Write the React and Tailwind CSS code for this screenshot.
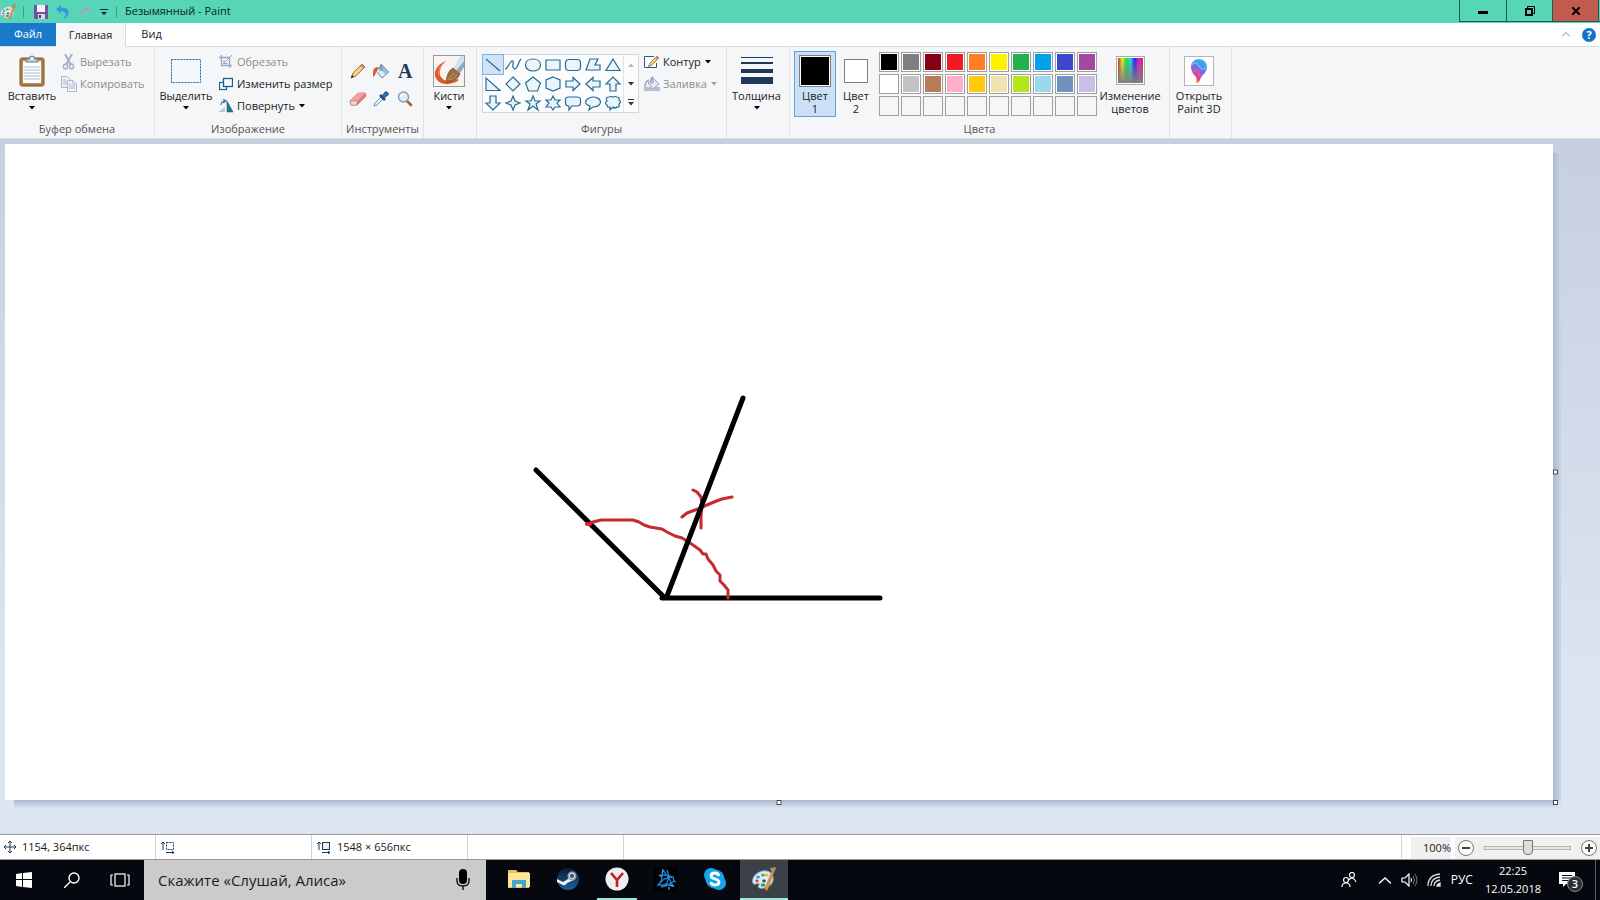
import {
    useState,
} from "react";

import clsx from "clsx";

// PALETTE
const COLORS = [
    "#000000", "#7f7f7f", "#880015", "#ed1c24", "#ff7f27",
    "#fff200", "#22b14c", "#00a2e8", "#3f48cc", "#a349a4",
    "#ffffff", "#c3c3c3", "#b97a57", "#ffaec9", "#ffc90e",
    "#efe4b0", "#b5e61d", "#99d9ea", "#7092be", "#c8bfe7",
    "", "", "", "", "", "", "", "", "", "",
];

// SHAPES GALLERY, 20x20 each
const SHAPES = [
    { name: "Линия", d: "M3 4L17 16" },
    { name: "Кривая", d: "M2 14C4 14 5 11 7 8S11 5 10 9S12 16 14 12S16 6 18 4" },
    { name: "Овал", d: "M10 4C14 4 17.500 6 17.500 10S14 16 10 16S2.500 14 2.500 10S6 4 10 4Z" },
    { name: "Прямоугольник", d: "M3 5H17V15H3Z" },
    { name: "Скругленный прямоугольник", d: "M6 4.500H14Q17.500 4.500 17.500 8V12Q17.500 15.500 14 15.500H6Q2.500 15.500 2.500 12V8Q2.500 4.500 6 4.500Z" },
    { name: "Многоугольник", d: "M7 4H15L12 10H17V15H3Z" },
    { name: "Треугольник", d: "M10 4L17 15.500H3Z" },
    { name: "Прямоугольный треугольник", d: "M3 4V16.500H17Z" },
    { name: "Ромб", d: "M10 3L17 10L10 17L3 10Z" },
    { name: "Пятиугольник", d: "M10 3L17.500 9L14.500 17H5.500L2.500 9Z" },
    { name: "Шестиугольник", d: "M10 3L17 6V14L10 17L3 14V6Z" },
    { name: "Стрелка вправо", d: "M3 7H10V3.500L17 10L10 16.500V13H3Z" },
    { name: "Стрелка влево", d: "M17 7H10V3.500L3 10L10 16.500V13H17Z" },
    { name: "Стрелка вверх", d: "M7 17V10H3L10 3L17 10H13V17Z" },
    { name: "Стрелка вниз", d: "M7 3V10H3L10 17L17 10H13V3Z" },
    { name: "Четырехконечная звезда", d: "M10 3L12 8L17 10L12 12L10 17L8 12L3 10L8 8Z" },
    { name: "Пятиконечная звезда", d: "M10 3L12 8H17L13 11L15 17L10 13L5 17L7 11L3 8H8Z" },
    { name: "Шестиконечная звезда", d: "M10 3L12 7H17L14 10L17 14H12L10 17L8 14H3L6 10L3 7H8Z" },
    { name: "Скругленная выноска", d: "M6 4H14Q17.500 4 17.500 7V10Q17.500 13 14 13H9L6 17V13Q2.500 13 2.500 10V7Q2.500 4 6 4Z" },
    { name: "Овальная выноска", d: "M10 4C14 4 17.500 6 17.500 9S14 14 10 14L6 17L7 13C4 12 2.500 11 2.500 9S6 4 10 4Z" },
    { name: "Выноска-облако", d: "M6 4Q8 3 10 4Q12 3 14 4Q17 4 16 7Q19 9 16 11Q17 15 14 14Q12 16 10 14L7 17L7 14Q4 15 4 12Q1 10 4 8Q2 4 6 4Z" },
];

const PaintLogo = ({ className }) => (
    <svg viewBox="0 0 24 24" className={className}>
        <path d="M11 4C17 3 22 7 21 13C20 19 14 22 8 21C6 21 6 19 7 18C8 16 6 16 4 17C1 18 0 15 1 12C2 8 6 5 11 4Z" fill="#dcebf5" stroke="#8fb3cc" strokeWidth="1" />
        <ellipse cx="11" cy="8" rx="2" ry="1.6" fill="#63a844" />
        <ellipse cx="6" cy="10" rx="2" ry="1.6" fill="#4b95d6" />
        <ellipse cx="5" cy="14" rx="1.8" ry="1.4" fill="#e04d2f" />
        <ellipse cx="11" cy="18" rx="2.4" ry="1.7" fill="#3fa447" />
        <ellipse cx="12" cy="14" rx="1.8" ry="1.4" fill="#3b4956" />
        <ellipse cx="15" cy="8" rx="1.6" ry="1.6" fill="#f0b32b" />
        <path d="M20 4L22 5L16 22L14 24L13 21Z" fill="#d99a4e" stroke="#a66b2a" strokeWidth=".5" />
        <path d="M18 1L24 0L23 4L20 6Z" fill="#b98a5c" />
    </svg>
);

const Arrow = ({ className }) => (
    <svg viewBox="0 0 6 4" className={clsx("h-1 w-1.5 shrink-0", className)}>
        <path d="M0 0H6L3 3.5Z" fill="currentColor" />
    </svg>
);

// RIBBON GROUP
const Group = ({ label, className, children }) => (
    <section className={clsx("flex shrink-0 flex-col justify-between border-r border-[#e0e2e4]", className)}>
        <div className="flex items-start pt-1">
            {children}
        </div>
        <h2 className="h-[18px] text-center text-[11px] leading-[18px] text-[#555]">
            {label}
        </h2>
    </section>
);

// LARGE BUTTON
const BigButton = ({ icon, label, second, arrow, active, onClick, className }) => (
    <button
        onClick={onClick}
        className={clsx(
            "flex h-[66px] shrink-0 flex-col items-center border text-[11px] leading-[13px] text-[#222]",
            active ? "border-[#62a2d4] bg-[#c9e0f7]" : "border-transparent",
            className
        )}
    >
        <span className="flex h-[37px] items-center">{icon}</span>
        <span className="whitespace-nowrap">{label}</span>
        {second && <span className="whitespace-nowrap">{second}</span>}
        {arrow && <Arrow className="mt-1 text-black" />}
    </button>
);

// SMALL BUTTON
const RowButton = ({ icon, label, arrow, disabled }) => (
    <button
        disabled={disabled}
        className={clsx(
            "flex h-[22px] items-center whitespace-nowrap text-[11px]",
            disabled ? "text-[#8c8c8c]" : "text-[#222]"
        )}
    >
        <span className="mr-0.5 flex w-[18px] justify-center">{icon}</span>
        {label}
        {arrow && <Arrow className={clsx("ml-1", disabled ? "text-[#a0a0a0]" : "text-black")} />}
    </button>
);

const PasteIcon = () => (
    <svg viewBox="0 0 26 32" className="h-8 w-[26px]">
        <rect x="1" y="3" width="24" height="28" rx="2" fill="#a87b3f" stroke="#7e5a2a" />
        <path d="M4 6H22V28H4Z" fill="#fbfdff" stroke="#ddd" strokeWidth=".5" />
        <path d="M5 12H21M5 15H21M5 18H21M5 21H21M5 24H21" stroke="#a9bfd4" />
        <path d="M7 7V4H10Q10 1 13 1T16 4H19V7Z" fill="#c9ced2" stroke="#6f767c" />
        <circle cx="13" cy="3.5" r="1.2" fill="#fff" />
    </svg>
);

const CutIcon = () => (
    <svg viewBox="0 0 16 16" className="size-4" fill="none" stroke="#a3b1cb">
        <path d="M4 0L10 11M11 0L5 11" strokeWidth="2" />
        <ellipse cx="4.5" cy="12.5" rx="2" ry="2.5" strokeWidth="1.5" />
        <ellipse cx="10.5" cy="12.5" rx="2" ry="2.5" strokeWidth="1.5" />
    </svg>
);

const CopyIcon = () => (
    <svg viewBox="0 0 16 16" className="size-4" fill="#eef2f8" stroke="#a9b8d0">
        <path d="M.5 .5H6L9.5 4V11.5H.5Z" />
        <path d="M2 4H5M2 6H6M2 8H6" />
        <path d="M6.500 4.500H12L15.500 8V15.500H6.500Z" />
        <path d="M12 4.500V8H15M8 10H14M8 12H14M8 8H10" />
    </svg>
);

const SelectIcon = () => (
    <svg viewBox="0 0 30 24" className="h-6 w-[30px]">
        <rect x=".5" y=".5" width="29" height="23" fill="#f3f8fd" stroke="#1d68a7" strokeDasharray="2 1" />
    </svg>
);

const CropIcon = () => (
    <svg viewBox="0 0 14 14" className="size-3.5" fill="none" stroke="#99a9c4">
        <path d="M2.500 0V10.500H13M0 2.500H10.500V13" strokeWidth="1.4" />
        <path d="M13 0L4 9M5 5V8.500H8.500" />
    </svg>
);

const ResizeIcon = () => (
    <svg viewBox="0 0 14 14" className="size-3.5" fill="#f4fafd" stroke="#1c5f8c">
        <rect x=".5" y="5.500" width="7" height="7" strokeWidth="1.2" />
        <rect x="4.500" y="1.500" width="9" height="8" strokeWidth="1.3" />
    </svg>
);

const RotateIcon = () => (
    <svg viewBox="0 0 16 14" className="h-3.5 w-4">
        <path d="M0 13L7 8V13Z" fill="#c3c8cc" />
        <path d="M9 2V13H15Z" fill="#2b7192" stroke="#174f6c" strokeWidth=".5" />
        <path d="M3 6Q3 2 7 2M5 0L8 2L5 4" fill="none" stroke="#2f7ab0" strokeWidth="1.2" />
    </svg>
);

const PencilIcon = () => (
    <svg viewBox="0 0 16 16" className="size-4">
        <path d="M1 15L3 10L12 1L15 4L6 13Z" fill="#f0c869" stroke="#8b6a3a" strokeWidth=".8" />
        <path d="M12 1L15 4L13 6L10 3Z" fill="#d98880" stroke="#9b6a55" strokeWidth=".5" />
        <path d="M5 11L12 4" stroke="#fbe6a8" />
        <path d="M1 15L2 12L4 14Z" fill="#222" />
    </svg>
);

const FillIcon = () => (
    <svg viewBox="0 0 18 16" className="h-4 w-[18px]">
        <path d="M10 2L17 9L10 15L4 8Z" fill="#dceaf5" stroke="#6687a5" />
        <path d="M10 2L17 9L14 12L7 5Z" fill="#9dbdd8" />
        <path d="M8 8V3Q9 0 10 2V8" fill="none" stroke="#6687a5" />
        <path d="M7 4Q1 4 1 9V14Q4 12 4 8Z" fill="#e0592b" />
    </svg>
);

const EraserIcon = () => (
    <svg viewBox="0 0 18 16" className="h-4 w-[18px]">
        <path d="M1 10L9 2L16 2L17 5L8 14L2 14Z" fill="#e07f80" stroke="#b06565" strokeWidth=".8" />
        <path d="M1 10L9 2L16 2L8 10Z" fill="#f0a5a4" />
        <path d="M1 10H8V14H2Z" fill="#fbd3d0" stroke="#b06565" strokeWidth=".5" />
    </svg>
);

const PickerIcon = () => (
    <svg viewBox="0 0 16 16" className="size-4">
        <path d="M1 15L2 12L8 6L10 8L4 14Z" fill="#e4f1fa" stroke="#5c7f9c" strokeWidth=".8" />
        <path d="M7 4L12 9" stroke="#1b4e7d" strokeWidth="2.500" />
        <path d="M9 5L12 1Q14 0 15 2Q16 3 15 4L11 7Z" fill="#2a72b0" stroke="#1b4e7d" strokeWidth=".8" />
    </svg>
);

const ZoomIcon = () => (
    <svg viewBox="0 0 16 16" className="size-4">
        <path d="M10 10L14 14" stroke="#a5643a" strokeWidth="2.600" strokeLinecap="round" />
        <circle cx="6.500" cy="6" r="5" fill="#ddeefa" stroke="#8b9bab" strokeWidth="1.400" />
        <path d="M3.500 6Q4 3 7 3" fill="none" stroke="#fff" strokeWidth="1.200" />
    </svg>
);

const BrushIcon = () => (
    <svg viewBox="0 0 32 32" className="size-8">
        <rect x=".5" y=".5" width="31" height="31" fill="#f7f5f3" stroke="#999" />
        <path d="M13 6C5 9 1 15 2 21C4 28 12 31 20 28C25 27 27 24 24 24C17 28 9 26 7 20C6 14 9 10 13 6Z" fill="#e2572b" />
        <path d="M12 7C7 11 5 15 6 20" fill="none" stroke="#f3a07f" />
        <path d="M31 1V12L26 20L20 15L28 1Z" fill="#8fa9bd" />
        <path d="M28 1L20 15L22 17L31 6V1Z" fill="#d7e2ea" />
        <path d="M20 13L27 19Q25 26 13 27Q14 16 20 13Z" fill="#9b6c3d" stroke="#6b4524" strokeWidth=".6" />
        <path d="M15 25Q19 19 22 18M17 25Q22 22 24 20" stroke="#c99b62" fill="none" />
    </svg>
);

const OutlineIcon = () => (
    <svg viewBox="0 0 16 14" className="h-3.5 w-4">
        <path d="M10 1.500H.5V12.500H12.500V8" fill="#fff" stroke="#1c5f8c" />
        <path d="M4 12L6 8L13 1L15 3L8 10Z" fill="#f0c869" stroke="#8b6a3a" strokeWidth=".7" />
        <path d="M13 1L15 3L13 5L11 3Z" fill="#d98880" />
    </svg>
);

const GrayFillIcon = () => (
    <svg viewBox="0 0 16 16" className="size-4">
        <path d="M0 11H16V15H0Z" fill="#b3bfd3" />
        <path d="M9 2L15 8L9 13L4 7Z" fill="#e3e8f0" stroke="#93a3bd" />
        <path d="M7 8V3Q8 0 9 2V7M5 4Q1 5 1 11" fill="none" stroke="#93a3bd" strokeWidth="1.300" />
    </svg>
);

const SizeIcon = () => (
    <svg viewBox="0 0 32 28" className="h-7 w-8">
        <path d="M0 0H32V1H0ZM0 5H32V7H0ZM0 12H32V16H0ZM0 20H32V27H0Z" fill="#1e395b" />
    </svg>
);

const SpectrumIcon = () => (
    <span className="block size-[29px] border border-[#aaa] bg-white p-px">
        <span className="block size-full bg-[linear-gradient(to_top,#808080,transparent),linear-gradient(to_right,#c03020,#f5f020,#20e040,#20d8e8,#2020e8,#e020d0,#e02040)]" />
    </span>
);

const Paint3DIcon = () => (
    <svg viewBox="0 0 30 30" className="size-[30px]">
        <defs>
            <linearGradient id="drop" x1=".7" y1="0" x2=".3" y2="1">
                <stop offset="0" stopColor="#29c4f0" />
                <stop offset=".35" stopColor="#5a7be6" />
                <stop offset=".6" stopColor="#b34fd0" />
                <stop offset=".8" stopColor="#e8446b" />
                <stop offset="1" stopColor="#f4a62a" />
            </linearGradient>
        </defs>
        <rect x=".5" y=".5" width="29" height="29" fill="#fdfdfd" stroke="#b5b5b5" />
        <path d="M15 3C20 3 23 7 23 11C23 17 17 19 16 24Q15 27 12 27Q13 24 12 21C9 18 7 15 7 11C7 6 11 3 15 3Z" fill="url(#drop)" />
        <path d="M8 9Q11 4 15 10T22 11" fill="none" stroke="#79e0f5" strokeWidth="1.500" opacity=".6" />
        <path d="M9 16Q13 10 16 20" fill="none" stroke="#f05a8c" strokeWidth="2" opacity=".7" />
    </svg>
);

const TitleBar = () => (
    <header className="flex h-[23px] items-stretch bg-[#57d6b7]">
        <div className="flex flex-1 items-center">
            <PaintLogo className="size-4" />
            <span className="ml-[7px] h-3 w-px bg-[#3a9f88]" />
            <button aria-label="Сохранить" className="ml-2.5">
                <svg viewBox="0 0 14 14" className="size-3.5">
                    <path d="M0 0H14V14H1L0 13Z" fill="#71529b" />
                    <path d="M3 0H11V7H3Z" fill="#f4f2f8" />
                    <path d="M4 9H11V14H4Z" fill="#d9d3e5" />
                    <path d="M5 10H7V13H5Z" fill="#4d3577" />
                </svg>
            </button>
            <button aria-label="Отменить" className="ml-2">
                <svg viewBox="0 0 14 14" className="size-3.5">
                    <path d="M0 4L5 0V3C11 2 14 6 12 10Q11 13 7 14Q11 10 9 8Q8 6 5 6V9Z" fill="#3b95dd" />
                </svg>
            </button>
            <button aria-label="Вернуть" className="ml-2">
                <svg viewBox="0 0 14 14" className="size-3.5">
                    <path d="M14 4L9 0V3C3 2 0 6 2 10Q3 13 7 14Q3 10 5 8Q6 6 9 6V9Z" fill="#7fb9b3" stroke="#8cc0c4" strokeWidth=".5" />
                </svg>
            </button>
            <button aria-label="Настройка панели" className="ml-2">
                <svg viewBox="0 0 8 8" className="size-2">
                    <path d="M0 1.500H8" stroke="#123" />
                    <path d="M1 4H7L4 7Z" fill="#123" />
                </svg>
            </button>
            <span className="ml-2 h-3 w-px bg-[#3a9f88]" />
            <h1 className="ml-2 text-[11px] text-[#0d2420]">Безымянный - Paint</h1>
        </div>
        <div className="flex h-[22px] border-b border-[#24584d]">
            <button aria-label="Свернуть" className="flex w-[47px] items-center justify-center border-l border-[#24584d]">
                <span className="mt-1 h-[3px] w-2.5 bg-black" />
            </button>
            <button aria-label="Восстановить" className="flex w-[46px] items-center justify-center border-l border-[#24584d]">
                <svg viewBox="0 0 10 10" className="size-2.5" fill="none" stroke="#000">
                    <path d="M2.500 2V.5H9.500V7.500H8" />
                    <rect x="1" y="3" width="6" height="6" strokeWidth="2" />
                </svg>
            </button>
            <button aria-label="Закрыть" className="mr-px flex w-[47px] items-center justify-center border-x border-[#24584d] bg-[#c35a50]">
                <svg viewBox="0 0 8 8" className="size-2" stroke="#000" strokeWidth="2">
                    <path d="M0 0L8 8M8 0L0 8" />
                </svg>
            </button>
        </div>
    </header>
);

const Tabs = () => (
    <nav className="flex h-6 items-stretch border-b border-[#dadbdc] bg-white text-[11px] text-[#222]">
        <button className="w-14 bg-[#1979ca] text-white">Файл</button>
        <button className="-mb-px w-[70px] border-r border-[#dadbdc] bg-[#f5f6f7]">Главная</button>
        <button className="w-[51px]">Вид</button>
        <div className="ml-auto flex items-center gap-3 pr-1">
            <button aria-label="Свернуть ленту">
                <svg viewBox="0 0 8 5" className="h-[5px] w-2" fill="none" stroke="#8a8a8a">
                    <path d="M0 4.500L4 .5L8 4.500" />
                </svg>
            </button>
            <button aria-label="Справка" className="size-3.5 rounded-full bg-[#1674c8] text-[11px] leading-[14px] font-bold text-white">
                ?
            </button>
        </div>
    </nav>
);

const Ribbon = () => {

    const [shape, setShape] =
        useState(0);

    const [slot, setSlot] =
        useState(1);

    const [picked, setPicked] =
        useState({
            1: "#000000",
            2: "#ffffff",
        });

    return (
        <div className="flex h-[92px] overflow-hidden border-b border-[#dadbdc] bg-[#f5f6f7]">

            {/* CLIPBOARD */}
            <Group label="Буфер обмена" className="w-[155px]">
                <BigButton icon={<PasteIcon />} label="Вставить" arrow className="w-[60px] pl-1" />
                <div>
                    <RowButton icon={<CutIcon />} label="Вырезать" disabled />
                    <RowButton icon={<CopyIcon />} label="Копировать" disabled />
                </div>
            </Group>

            {/* IMAGE */}
            <Group label="Изображение" className="w-[187px]">
                <BigButton icon={<SelectIcon />} label="Выделить" arrow className="w-[62px]" />
                <div>
                    <RowButton icon={<CropIcon />} label="Обрезать" disabled />
                    <RowButton icon={<ResizeIcon />} label="Изменить размер" />
                    <RowButton icon={<RotateIcon />} label="Повернуть" arrow />
                </div>
            </Group>

            {/* TOOLS */}
            <Group label="Инструменты" className="w-[82px]">
                <div className="grid w-full grid-cols-3 pt-1.5 pr-1.5 pl-1">
                    <button aria-label="Карандаш" className="flex h-7 items-center justify-center"><PencilIcon /></button>
                    <button aria-label="Заливка цветом" className="flex h-7 items-center justify-center"><FillIcon /></button>
                    <button aria-label="Текст" className="h-7 font-['Liberation_Serif',serif] text-[20px] leading-7 font-bold text-[#1e395b]">A</button>
                    <button aria-label="Ластик" className="flex h-7 items-center justify-center"><EraserIcon /></button>
                    <button aria-label="Палитра" className="flex h-7 items-center justify-center"><PickerIcon /></button>
                    <button aria-label="Масштаб" className="flex h-7 items-center justify-center"><ZoomIcon /></button>
                </div>
            </Group>

            {/* BRUSHES */}
            <Group className="w-[53px]">
                <BigButton icon={<BrushIcon />} label="Кисти" arrow className="w-[50px]" />
            </Group>

            {/* SHAPES */}
            <Group label="Фигуры" className="w-[250px]">
                <div className="mt-[3px] ml-[5px] flex border border-[#d3d6da] bg-[#fbfcfe]">
                    <div className="grid grid-cols-7">
                        {SHAPES.map(
                            (item, index) => (
                                <button
                                    key={item.name}
                                    aria-label={item.name}
                                    onClick={() => setShape(index)}
                                    className={clsx(
                                        "flex h-[19px] w-5 items-center justify-center",
                                        index === shape && "bg-[#cfe3f8] outline outline-[#7fb2e0]"
                                    )}
                                >
                                    <svg viewBox="0 0 20 20" className="size-5" fill={index < 2 ? "none" : "#eaf4fb"} stroke="#2a6a94" strokeWidth="1.2">
                                        <path d={item.d} />
                                    </svg>
                                </button>
                            )
                        )}
                    </div>
                    <div className="grid w-[15px] grid-rows-3 place-items-center border-l border-[#e0e2e4] text-[#333]">
                        <button aria-label="Выше"><Arrow className="rotate-180 text-[#b5b5b5]" /></button>
                        <button aria-label="Ниже"><Arrow /></button>
                        <button aria-label="Все фигуры" className="flex flex-col items-center gap-0.5 border-t border-[#333] pt-0.5"><Arrow /></button>
                    </div>
                </div>
                <div className="ml-1">
                    <RowButton icon={<OutlineIcon />} label="Контур" arrow />
                    <RowButton icon={<GrayFillIcon />} label="Заливка" arrow disabled />
                </div>
            </Group>

            {/* SIZE */}
            <Group className="w-[63px]">
                <BigButton icon={<SizeIcon />} label="Толщина" arrow className="w-[59px]" />
            </Group>

            {/* COLORS */}
            <Group label="Цвета" className="w-[380px]">
                <BigButton
                    label="Цвет"
                    second="1"
                    active={slot === 1}
                    onClick={() => setSlot(1)}
                    className="ml-1 w-[42px]"
                    icon={
                        <span className="size-8 border border-[#7f7f7f] bg-white p-px">
                            <span className="block size-full" style={{ background: picked[1] }} />
                        </span>
                    }
                />
                <BigButton
                    label="Цвет"
                    second="2"
                    active={slot === 2}
                    onClick={() => setSlot(2)}
                    className="w-10"
                    icon={
                        <span className="size-6 border border-[#7f7f7f] bg-white p-px">
                            <span className="block size-full" style={{ background: picked[2] }} />
                        </span>
                    }
                />
                <div className="mt-px ml-[3px] grid grid-cols-10 gap-0.5">
                    {COLORS.map(
                        (color, index) => (
                            <button
                                key={index}
                                aria-label={color || "Пусто"}
                                onClick={() =>
                                    color &&
                                    setPicked({
                                        ...picked,
                                        [slot]: color,
                                    })
                                }
                                className={clsx(
                                    "size-5 border border-[#a0a0a0] p-px",
                                    color && "bg-white"
                                )}
                            >
                                <span className="block size-full" style={{ background: color }} />
                            </button>
                        )
                    )}
                </div>
                <BigButton icon={<SpectrumIcon />} label="Изменение" second="цветов" className="w-[66px]" />
            </Group>

            {/* PAINT 3D */}
            <Group className="w-[62px]">
                <BigButton icon={<Paint3DIcon />} label="Открыть" second="Paint 3D" className="w-[58px]" />
            </Group>
        </div>
    );
};

const Handle = ({ className }) => (
    <span className={clsx("absolute z-10 size-[5px] border border-[#444] bg-white", className)} />
);

const Workspace = () => (
    <main className="flex flex-1 bg-linear-to-b from-[#c5cfdf] to-[#dce6f2] to-80% pt-[5px] pr-[39px] pb-[26px] pl-[5px]">
        <div className="grid flex-1 grid-cols-[1fr_8px] grid-rows-[1fr_8px]">
            <div className="relative bg-white">
                <svg
                    viewBox="0 0 1548 656"
                    preserveAspectRatio="xMinYMin meet"
                    className="absolute inset-0 size-full"
                    fill="none"
                    strokeLinecap="round"
                    strokeLinejoin="round"
                >
                    <path d="M657 454H875M531 326L659 453" stroke="#000" strokeWidth="5" />
                    <path
                        d="M583 380L588 378L596 376H628L634 378L639 381L645 383L651 384L657 385L662 388L670 392L677 394L682 397L688 401L695 406L698 410L701 410L703 415L708 421L711 427L715 431L715 437L719 441L723 446V454M688 346L692 348L696 353L697 361L696 373V384M677 373L682 369L690 366L696 364L702 361L709 358L717 355L727 353"
                        stroke="#c6292e"
                        strokeWidth="3"
                    />
                    <path d="M582 380L585 380" stroke="#e01f26" strokeWidth="4" />
                    <path d="M738 254L662 452" stroke="#000" strokeWidth="5" />
                </svg>
                <Handle className="top-1/2 -right-[5px] -translate-y-1/2" />
                <Handle className="-bottom-[5px] left-1/2 -translate-x-1/2" />
                <Handle className="-right-[5px] -bottom-[5px]" />
            </div>
            <div className="mt-[9px] bg-linear-to-r from-[#adb9ce] to-[#c9d4e4]" />
            <div className="ml-[9px] bg-linear-to-b from-[#adb9ce] to-[#d8e2ef]" />
            <div className="bg-linear-to-br from-[#b3bfd3] to-[#d8e2ef] to-60%" />
        </div>
    </main>
);

const StatusBar = () => {

    const [zoom, setZoom] =
        useState(50);

    return (
        <footer className="flex h-[26px] items-stretch border-y border-[#9a9a9a] bg-white text-[11px] text-[#1a1a1a]">
            <div className="flex w-[156px] items-center gap-1.5 border-r border-[#d5d5d5] pl-1">
                <svg viewBox="0 0 12 12" className="size-3" fill="none" stroke="#1e395b">
                    <path d="M6 0V12M0 6H12M4 2L6 0L8 2M4 10L6 12L8 10M2 4L0 6L2 8M10 4L12 6L10 8" />
                </svg>
                1154, 364пкс
            </div>
            <div className="flex w-[156px] items-center border-r border-[#d5d5d5] pl-[5px]">
                <svg viewBox="0 0 14 13" className="h-[13px] w-3.5" fill="none" stroke="#1e395b">
                    <path d="M2 1V9M0 3L2 1L4 3M5 11.500H13M11 10L13 11.500L11 13" />
                    <rect x="5.500" y="1.500" width="7" height="7" strokeDasharray="2 1" />
                </svg>
            </div>
            <div className="flex w-[156px] items-center gap-1.5 border-r border-[#d5d5d5] pl-[5px]">
                <svg viewBox="0 0 14 13" className="h-[13px] w-3.5" fill="none" stroke="#1e395b">
                    <path d="M2 1V9M0 3L2 1L4 3M5 11.500H13M11 10L13 11.500L11 13" />
                    <rect x="5.500" y="1.500" width="7" height="7" fill="#e3f1fa" />
                </svg>
                1548 × 656пкс
            </div>
            <div className="w-[156px] border-r border-[#d5d5d5]" />
            <div className="flex-1 border-r border-[#d5d5d5]" />
            <label htmlFor="zoom" className="mt-0.5 ml-[9px] flex w-10 items-center justify-end bg-[#f0f0f0]">
                100%
            </label>
            <div className="mt-0.5 ml-1 flex w-[145px] items-center bg-[#f0f0f0] px-[3px]">
                <button aria-label="Уменьшить" onClick={() => setZoom(zoom - 10)}>
                    <svg viewBox="0 0 16 16" className="size-4" fill="#fafafa" stroke="#777">
                        <circle cx="8" cy="8" r="7.500" />
                        <path d="M4 8H12" stroke="#444" strokeWidth="2" />
                    </svg>
                </button>
                <input
                    id="zoom"
                    type="range"
                    value={zoom}
                    onChange={(e) =>
                        setZoom(
                            Number(e.target.value)
                        )
                    }
                    className="mx-2.5 h-4 min-w-0 flex-1 appearance-none bg-transparent [&::-webkit-slider-runnable-track]:h-1 [&::-webkit-slider-runnable-track]:border [&::-webkit-slider-runnable-track]:border-[#b5b5b5] [&::-webkit-slider-runnable-track]:bg-[#e8e8e8] [&::-webkit-slider-thumb]:-mt-[7px] [&::-webkit-slider-thumb]:h-[15px] [&::-webkit-slider-thumb]:w-2.5 [&::-webkit-slider-thumb]:appearance-none [&::-webkit-slider-thumb]:rounded-b-[4px] [&::-webkit-slider-thumb]:border [&::-webkit-slider-thumb]:border-[#777] [&::-webkit-slider-thumb]:bg-[#dcdcdc]"
                />
                <button aria-label="Увеличить" onClick={() => setZoom(zoom + 10)}>
                    <svg viewBox="0 0 16 16" className="size-4" fill="#fafafa" stroke="#777">
                        <circle cx="8" cy="8" r="7.500" />
                        <path d="M4 8H12M8 4V12" stroke="#444" strokeWidth="2" />
                    </svg>
                </button>
            </div>
        </footer>
    );
};

// TASKBAR APPS
const APPS = [
    {
        name: "Проводник",
        icon: (
            <svg viewBox="0 0 24 24" className="size-6">
                <path d="M1 3H9L11 5H22V21H1Z" fill="#e9c44c" />
                <path d="M1 6H23V20H1Z" fill="#fbe69a" />
                <path d="M5 21V13H19V21H15V17H9V21Z" fill="#46a5cf" />
            </svg>
        ),
    },
    {
        name: "Steam",
        icon: (
            <svg viewBox="0 0 24 24" className="size-6">
                <defs>
                    <linearGradient id="steam" x1="0" y1="0" x2="0" y2="1">
                        <stop offset="0" stopColor="#0c1a35" />
                        <stop offset="1" stopColor="#1c6199" />
                    </linearGradient>
                </defs>
                <circle cx="12" cy="12" r="11" fill="url(#steam)" />
                <path d="M1 12L7 15L12 12L13 7L18 13L11 16Q9 20 5 17L1 15Z" fill="#eef2f6" />
                <circle cx="16" cy="9" r="4.500" fill="#9aa7b8" />
                <circle cx="16" cy="9" r="2.500" fill="#3c4a60" stroke="#dde3ea" />
            </svg>
        ),
    },
    {
        name: "Yandex",
        open: true,
        icon: (
            <svg viewBox="0 0 24 24" className="size-6">
                <circle cx="12" cy="12" r="11.500" fill="#efefef" />
                <path d="M6 6L12 13L18 6M12 12V20" fill="none" stroke="#c31f1f" strokeWidth="2.600" />
            </svg>
        ),
    },
    {
        name: "Battle.net",
        icon: (
            <svg viewBox="0 0 24 24" className="size-6" fill="none" stroke="#1d87d6" strokeWidth="1.300">
                <path d="M0 0H24V24H0Z" fill="#000" stroke="none" />
                <path d="M7 16L9 3L12 7L17 15L19 19L14 18L4 18L8 13M6 8L12 8L19 10L20 14L12 19L7 20M13 3L15 9L13 16L9 19M4 18L10 12L18 10" />
                <path d="M9 3L8 6M5 8L8 10M15 20L15 23M20 14L22 15M16 18L20 19" stroke="#3aa0e8" />
            </svg>
        ),
    },
    {
        name: "Skype",
        icon: (
            <svg viewBox="0 0 24 24" className="size-6">
                <circle cx="8" cy="8" r="7" fill="#12a5ea" />
                <circle cx="16" cy="16" r="7" fill="#12a5ea" />
                <circle cx="12" cy="12" r="9.500" fill="#12a5ea" />
                <path d="M16 9Q15 6 12 6Q8 6 8 9Q8 11 12 12Q16 13 16 15Q16 18 12 18Q8 18 8 15" fill="none" stroke="#fff" strokeWidth="2.800" />
            </svg>
        ),
    },
    {
        name: "Paint",
        active: true,
        icon: <PaintLogo className="size-6" />,
    },
];

const Taskbar = () => (
    <div className="flex h-10 items-stretch bg-[#05090f] text-white">
        <button aria-label="Пуск" className="flex w-12 items-center justify-center">
            <svg viewBox="0 0 16 16" className="size-4" fill="#fff">
                <path d="M0 2L6 1V7H0ZM7 1L16 0V7H7ZM0 8H6V15L0 14ZM7 8H16V16L7 15Z" />
            </svg>
        </button>
        <button aria-label="Поиск" className="flex w-12 items-center justify-center">
            <svg viewBox="0 0 16 16" className="size-4" fill="none" stroke="#fff" strokeWidth="1.400">
                <circle cx="10" cy="6" r="5" />
                <path d="M6 10L0 16" />
            </svg>
        </button>
        <button aria-label="Представление задач" className="flex w-12 items-center justify-center">
            <svg viewBox="0 0 20 14" className="h-3.5 w-5" fill="none" stroke="#fff" strokeWidth="1.200">
                <rect x="5" y="1" width="10" height="12" />
                <path d="M3 2H1V12H3M17 2H19V12H17" />
            </svg>
        </button>
        <div className="flex w-[342px] items-center bg-[#cbcbcb] pr-4 pl-3.5 text-black">
            <input
                aria-label="Алиса"
                placeholder="Скажите «Слушай, Алиса»"
                className="min-w-0 flex-1 bg-transparent text-[15px] outline-none placeholder:text-[#1c1c1c]"
            />
            <button aria-label="Голосовой ввод">
                <svg viewBox="0 0 14 22" className="h-[22px] w-3.5">
                    <rect x="3" y="0" width="8" height="15" rx="4" fill="#000" />
                    <path d="M1 9V12Q1 17 7 17T13 12V9M7 17V21" fill="none" stroke="#111" strokeWidth="1.400" />
                </svg>
            </button>
        </div>
        <div className="ml-[9px] flex">
            {APPS.map(
                (app) => (
                    <button
                        key={app.name}
                        aria-label={app.name}
                        className={clsx(
                            "mr-px flex w-12 flex-col items-center",
                            app.active && "bg-[#3a4147]"
                        )}
                    >
                        <span className="flex flex-1 items-center">{app.icon}</span>
                        <span
                            className={clsx(
                                "h-0.5",
                                app.open && "w-10 bg-[#9be8da]",
                                app.active && "w-full bg-[#9be8da]"
                            )}
                        />
                    </button>
                )
            )}
        </div>

        {/* TRAY */}
        <div className="ml-auto flex items-center">
            <svg viewBox="0 0 16 16" className="size-4" fill="none" stroke="#fff" strokeWidth="1.200">
                <circle cx="5" cy="8" r="2.500" />
                <path d="M1 15Q1 11 5 11T9 15" />
                <circle cx="11" cy="3" r="2.500" />
                <path d="M8 8Q9 6 11 6T15 10" />
            </svg>
            <svg viewBox="0 0 12 7" className="ml-[22px] h-[7px] w-3" fill="none" stroke="#fff" strokeWidth="1.300">
                <path d="M0 6.500L6 1L12 6.500" />
            </svg>
            <svg viewBox="0 0 18 14" className="ml-2.5 h-3.5 w-[18px]" fill="none" stroke="#fff">
                <path d="M1 5H4L8 1V13L4 9H1Z" strokeWidth="1.200" />
                <path d="M10 5Q11 7 10 9" />
                <path d="M12 3Q15 7 12 11M14 1Q18 7 14 13" stroke="#777" />
            </svg>
            <svg viewBox="0 0 14 14" className="ml-2 size-3.5" fill="none" stroke="#ddd" strokeWidth="1.300">
                <path d="M1 13Q1 2 13 1M4 13Q4 5 13 4M7 13Q7 8 13 7" />
                <path d="M10 13Q10 11 13 10V13Z" fill="#fff" />
            </svg>
            <span className="ml-2.5 text-[12px]">РУС</span>
            <time className="ml-3 text-center text-[11px] leading-[18px]">
                22:25
                <br />
                12.05.2018
            </time>
            <button aria-label="Уведомления" className="relative ml-[18px] h-6 w-6">
                <svg viewBox="0 0 16 16" className="size-4" fill="#fff">
                    <path d="M0 0H16V12H7L4 15V12H0Z" />
                    <path d="M3 3.500H13M3 6H13M3 8.500H10" stroke="#05090f" />
                </svg>
                <span className="absolute right-0 bottom-0 size-4 rounded-full border border-[#8a8a8a] bg-[#2b2d30] text-[11px] leading-[14px] font-semibold">
                    3
                </span>
            </button>
            <span className="ml-3 h-10 w-[5px] border-l border-[#5c6064]" />
        </div>
    </div>
);

const App = () => (
    <div className="flex min-h-screen flex-col bg-white font-['Open_Sans','Noto_Sans',sans-serif]">
        <TitleBar />
        <Tabs />
        <Ribbon />
        <Workspace />
        <StatusBar />
        <Taskbar />
    </div>
);

export default App;
